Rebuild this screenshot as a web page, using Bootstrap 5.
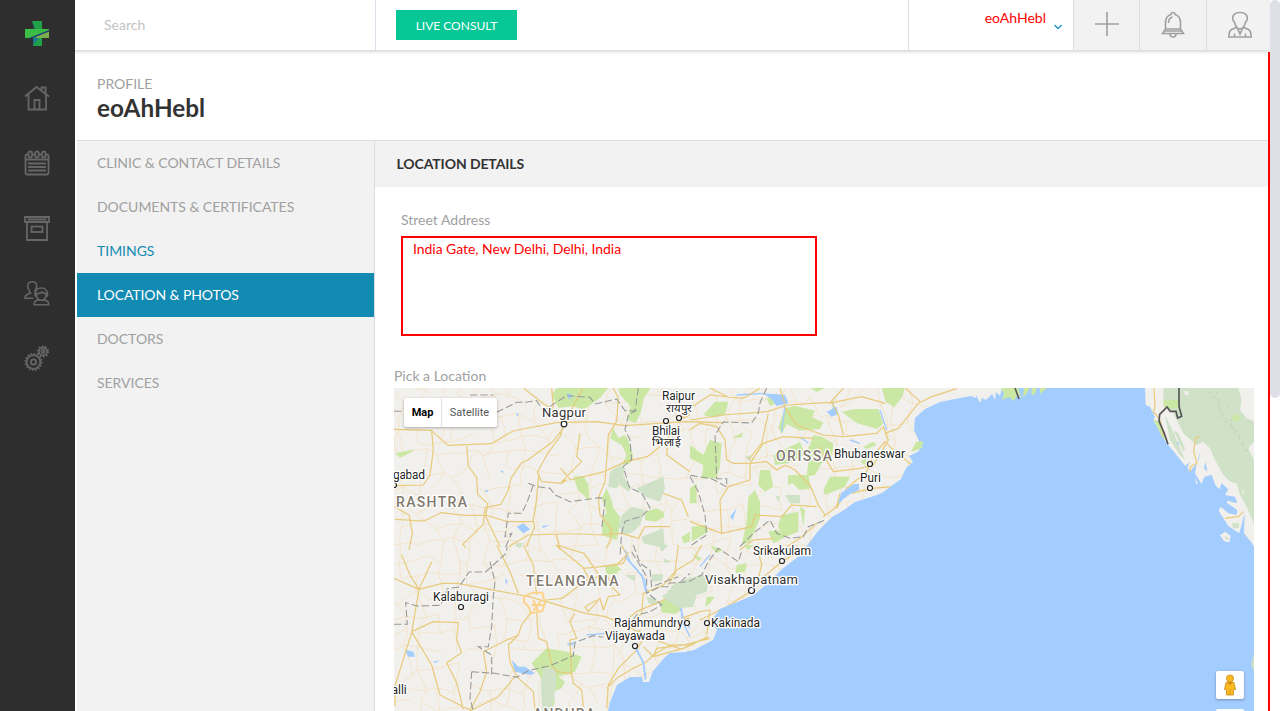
<!DOCTYPE html>
<html lang="en">
<head>
<meta charset="utf-8">
<meta name="viewport" content="width=device-width, initial-scale=1">
<title>Profile - Location &amp; Photos</title>
<link rel="stylesheet" href="https://cdn.jsdelivr.net/npm/bootstrap@5.3.0/dist/css/bootstrap.min.css">
<style>
body{font-family:Lato,sans-serif;font-size:14px;line-height:20px;color:#333;height:711px;overflow:hidden;background:#fff}
.rail{width:75px;background:#2e2e2e;padding:20px 1px 0 0;gap:39px}
.rail svg{width:26px;height:26px;fill:none;stroke:#666;stroke-width:1.8}
.shell{width:1193px;margin-left:2px}
.topbar{height:51px;margin-left:-2px;width:1195px;border-bottom:1px solid #ddd;box-shadow:0 1px 3px rgba(0,0,0,.15);position:relative;z-index:2;background:#fff}
.search-box{width:301px;border-right:1px solid #dddde9;padding-left:29px;color:#c3c3c3}
.consult{width:121px;height:30px;margin:10px 0 0 20px;background:#07c796;color:#fff;font-size:12px;border-radius:0;padding:0;line-height:30px}
.account{width:166px;border-left:1px solid #ddd;border-right:1px solid #ddd;color:red;padding:8px 7px 0 0}
.tool{height:50px;background:#f2f2f2;border-right:1px solid #ddd}
.tool svg{fill:none;stroke:#a0a0a0;stroke-width:1.6}
.profile-head{height:90px;border-bottom:1px solid #ddd;padding:23px 0 0 20px}
.profile-head div{height:20px}
.profile-head h1{font-size:24.300px;line-height:28px;font-weight:700;margin:0}
.muted-ink{color:#a0a0a0}
.side{width:298px;background:#f2f2f2;border-right:1px solid #ddd}
.side .nav-link{height:44px;padding:12px 20px;color:#a0a0a0;border-radius:0;letter-spacing:-.03px}
.side .visited-step{color:#128bb3}
.side .active{background:#128bb3;color:#fff;letter-spacing:-.1px}
.section-title{height:46px;background:#f2f2f2;padding:13px 21.500px;font-weight:700;letter-spacing:-.1px}
.address{width:416px;height:100px;border:2px solid red;border-radius:0;color:red;font-size:14px;line-height:20px;padding:1px 10px;resize:none;letter-spacing:-.05px}
.error-edge{width:2px;background:red;margin-top:52px}
.scroll-track{width:10px;background:#fff}
.scroll-thumb{height:398px;background:#dfdfe8;border-radius:5px}
.map-wrap{width:860px;height:323px;margin-left:19px;font-family:Roboto,sans-serif}
.map-type{left:10px;top:10px;height:29px;font-size:11px;background:#fff;border-radius:2px;box-shadow:0 1px 3px rgba(0,0,0,.3)}
.map-type span{line-height:29px;text-align:center}
.street-man{right:10px;top:283px;width:28px;height:28px;background:#fff;border-radius:2px;box-shadow:0 1px 3px rgba(0,0,0,.3)}
.zoom-ctl{right:10px;top:321px;width:28px;height:28px;background:#fff;border-radius:2px}
.park{fill:#cae7a3}.wood{fill:#cfe2c8}.water{fill:#a3ccff}.land{fill:#f2f0ec}
.major{fill:none;stroke:#e8ca7b;stroke-width:3.6;stroke-linejoin:round}
.minor{fill:none;stroke:#f3e3c8;stroke-width:.9;stroke-linejoin:round}
.stateline{fill:none;stroke:#999;stroke-width:3.2;stroke-dasharray:22 9}
.stream{fill:none;stroke:#a3ccff;stroke-width:4}
.places text{font-size:12px;fill:#222;stroke:#fff;stroke-width:2.5px;paint-order:stroke;stroke-linejoin:round}
.places .city{font-size:13px;fill:#333}
.places .hindi{font-size:11px;font-family:sans-serif}
.places .region{font-size:14px;fill:#80796c;font-weight:500}
.places circle{fill:#fff;stroke:#222;stroke-width:1.2}
</style>
</head>
<body>
<div class="d-flex h-100">
  <aside class="rail d-flex flex-column align-items-center flex-shrink-0">
    <svg viewBox="0 0 26 26"><g stroke="none"><path fill="#21a04a" d="M8 1h10v8h7v9h-7v8H9v-8H1V9h9z"/><path fill="#3cbd45" d="M1 9h24v1.500L7 18H1z"/><path fill="#78ae4c" d="M12 16l13-4.500V18H12z"/><path fill="#207887" d="M9 18h6l-6 7z"/><path fill="#233d79" d="M5 18 25 10v1.500L9 18zM8 1l3 8h-1z"/></g></svg>
    <svg viewBox="0 0 26 26"><path d="M1 11.500 12.500 2 25 11.500M4.500 9.500V24.500H22V9.500M10.500 24.500V15h5v9.500M17.500 5.500V2.500h4v6.500"/></svg>
    <svg viewBox="0 0 26 26"><path d="M4 4.500H3Q1.500 4.500 1.500 6v16.500Q1.500 24.500 3 24.500h20q1.500 0 1.500-2V6q0-1.500-1.500-1.500h-1M1.500 9.500h23M8 4.500h3M15 4.500h3M4 13.500h18M4 17h18M4 20.500h18"/><rect x="4.500" y="1.500" width="3.500" height="6" rx="1.700"/><rect x="11.200" y="1.500" width="3.500" height="6" rx="1.700"/><rect x="18" y="1.500" width="3.500" height="6" rx="1.700"/></svg>
    <svg viewBox="0 0 26 26"><path d="M1 2h24v5H1zM3 7v18h20V7M3.500 4.500h19"/><rect x="7.500" y="11.500" width="11" height="5.500"/></svg>
    <svg viewBox="0 0 26 26" style="stroke-width:1.6"><path d="M10.500 11.500C12 9 13 7.500 12.700 5.500 12.300 3 10.500 1.700 8.200 1.700S4 3 3.700 5.500C3.500 8 4.500 9 5 10 5.500 11.500 6 12.500 6.500 13L2.500 15Q1 16 1 18.300H9.500M12.500 16.500Q11 16.500 11 14.500C11 10.500 13.500 8 17.200 8S23.500 10.500 23.500 14.500Q23.500 16.500 22 16.500M12.500 13.500Q17 13.500 18 12 20 13.500 22 13.500V16C21.500 18.500 19.500 20.300 17.200 20.300S13 18.500 12.500 16ZM14.500 19.700 11.500 21Q10 22 10 24.700H24.800Q24.800 22 23 21L20 19.700"/></svg>
    <svg viewBox="0 0 26 26"><circle cx="9.500" cy="17" r="6.800"/><circle cx="9.500" cy="17" r="8.200" stroke-dasharray="1.600 1.620"/><circle cx="9.500" cy="17" r="2.600"/><circle cx="19" cy="6.500" r="4"/><circle cx="19" cy="6.500" r="5.300" stroke-dasharray="1.500 1.830"/><circle cx="19" cy="6.500" r="1.500"/></svg>
  </aside>
  <main class="shell d-flex flex-column flex-shrink-0">
    <header class="topbar d-flex flex-shrink-0">
      <div class="search-box d-flex align-items-center">Search</div>
      <button class="btn consult">LIVE CONSULT</button>
      <div class="account d-flex ms-auto justify-content-end"><span>eoAhHebl</span><svg class="ms-1 mt-2" width="16" height="16" fill="none" stroke="#2196c4" stroke-width="1.400"><path d="M4.500 9 8 12.500 11.500 9"/></svg></div>
      <div class="tool d-flex align-items-center justify-content-center" style="width:66px"><svg width="24" height="24" style="margin-top:-3px"><path d="M12 0v24M0 12h24"/></svg></div>
      <div class="tool d-flex align-items-center justify-content-center" style="width:67px"><svg width="24" height="28" viewBox="0 0 24 28"><path d="M4.500 18v-6q0-7 5.500-8.500 0-2 2-2t2 2q5.500 1.500 5.500 8.500v6M4.500 18h15l3 4.500H1.500L4.500 18M4 20h16M9 23q0 3 3 3t3-3M7.500 12q0-5 4-6"/></svg></div>
      <div class="tool d-flex align-items-center justify-content-center border-end-0" style="width:63px"><svg width="24" height="28" viewBox="0 0 24 28" style="margin-left:2px"><path d="M12 1.500C7 1.500 4.500 4 4.700 7.500Q4.900 10 6.300 11C7.500 15 9.500 18 12 18S16.500 15 17.700 11Q19.100 10 19.300 7.500C19.500 4 17 1.500 12 1.500ZM8.500 16.500 3.500 18.500Q.8 20.500.8 26H23.200Q23.200 20.500 20.500 18.500L15.500 16.500M9.500 17.500 12 23l2.500-5.500M6.500 22.500V26M17.500 22.500V26"/></svg></div>
    </header>
    <section class="profile-head flex-shrink-0"><div class="muted-ink">PROFILE</div><h1>eoAhHebl</h1></section>
    <div class="d-flex flex-grow-1">
      <nav class="side nav flex-column flex-shrink-0">
        <a class="nav-link">CLINIC &amp; CONTACT DETAILS</a><a class="nav-link">DOCUMENTS &amp; CERTIFICATES</a><a class="nav-link visited-step">TIMINGS</a><a class="nav-link active">LOCATION &amp; PHOTOS</a><a class="nav-link">DOCTORS</a><a class="nav-link">SERVICES</a>
      </nav>
      <section class="flex-grow-1">
        <div class="section-title">LOCATION DETAILS</div>
        <label class="muted-ink d-block" style="margin:23px 0 6px 26px">Street Address</label>
        <textarea class="address form-control shadow-none" style="margin-left:26px">India Gate, New Delhi, Delhi, India</textarea>
        <div class="muted-ink" style="margin:30px 0 2px 19px">Pick a Location</div>
        <div class="map-wrap position-relative overflow-hidden">
<svg class="d-block" width="860" height="323" viewBox="394 388 860 323">
<rect class="land" x="394" y="388" width="860" height="323"/>
<path id="mesh" class="minor"/>
<!-- forests and reserves, west -->
<g transform="translate(390 380) scale(.33333)">
<path class="park" d="M500 24h155l-25 30-50 35-30-10-45 5-20-40zM685 24h97l-20 30-10 45-15 30-25-10 10-40-32-35zM670 145l-10 30 35 20 15 30-15 30 25-5 10-20-15-50-10-15-20 10zM650 325l15 35 5 25 20 25-5 50-5 20-45-15 5-55 10-15-15-40zM550 290l30-2 15 25 3 50-15-15-20-20zM765 395l35-10 20 10 3 15-25 15-33-5zM875 470l25-15v30l-20 5zM15 220l60-12-15 10-30 15z"/>
<path class="wood" d="M660 275l30-20 15 10-10 35-15 25-25-5zM695 405l30-25 40 10-15 45-20 20-25 10-20-25zM740 325l80-35 5 35-15 40-45-15zM755 470l65-25 5 60-65-15zM375 490h25l-10 15zM695 280l30 45-10 10-25-20z"/>
<path class="water" d="M380 440l20-10 20 18-20 12zM285 330h12l-8 8zM380 95l6 12-6 3zM530 40l18 5-10 15zM455 438l25-4-20 10zM330 272h10v8z"/>
<path class="major" d="M12 148l112 3 50 45 130-5 65-38 130-25 120-3 85 12 185-12 110 3M400 24l65 50 25 15 30 38-8 40-40 55-30 55 13 28 60 5 15-10-15 5 60-60-15-15 10-70M485 24l5 60M578 24l-50 95M670 24l15 30-5 70-25 40-5 75-5 65-20 50 5 50 35 45-5 35-12 20M520 145l-32 40-75 55-20 10-30 45-8 35-22 43-48 10-5 50-62 60 10 10M125 150l5 60-10 75-20 30-80 2M230 198l5 60 25 35 3 50 30 28-5 35-65 0-70-8-50 25-88-5M287 405l65 20h80M447 280l-10 100-8 40 5 20-25 60M512 265l30 35 100-25 65-30 65-15 50-40M12 380l45 25 10 55-10 50M285 405l45 95M355 500l60-35 100-3 60 0 60 3 60-5 50 15 20-35h75M500 465l10 45M820 340l55 20 20 50M865 55l15 60 20-10M840 125l-10 100 70 50"/>
<path class="stateline" d="M12 94h30M240 45h70M320 97l60-30 25 0 35-5 20 30 70-45 70 5 15 20 65-15 25 35 30 0 15 0M745 24l-10 70-20 10-10 45 15 30 5 60-25 20 15 55 5 10 35 15 25 45-25 25-50 15-10 35-5 70M415 310l25 10 40 5 15 20 45 20 90-12 15 5-10 90M430 315l-20 55-15 30-40 0-10 70 20-10-20 45"/>
</g>
<!-- central highlands -->
<g transform="translate(390 545) scale(.33333)">
<path class="park" d="M425 355l45-45 60 10 45 15-20 45-50 15 20 15-10 20-25 10 5 30-15 35h-20l15-65-15-30zM815 165l35 0 22 30-15 12-40-5zM645 65l35-5 15 15-40 12z"/>
<path class="wood" d="M460 370l35 0 5 40-15 88h-28l-5-80zM830 140l70-45v90l-35-20zM785 88l35 0-5 20-30 2zM820 40l25 10-20 5zM370 0h25l-5 10zM770 155l30 5v20l-25-5z"/>
<path class="water" d="M365 345l20 20 20 0 30 20-15 5-25-5-20-5zM530 295l30-5-20 15zM45 315l25 5 5 15-20 0zM130 350l20-5-15 10zM345 100l8 8-5 12z"/>
<path class="major" d="M12 100l75 33 70-18 45 0 215 40 70 20 100 30 60 10 50 22 50 25 55 25 70 25M35 30l25 60 27 43-22 130-50 160 0 60M65 260l60 100 25 90 95 48M125 50l-38 83M65 260l65-30 75 3-5 50 15 40-45 30 30 60 20 80M320 0l40 80 25 65M400 0l30 60 10 90M497 0l80 65 20 35-80 60-50 5M497 0l85 25 45 65-30 25M580 70l100-10 30-30-15-30M620 165l-35 20 10 15 35-40 10 35 15-40 35-5-25-25-15-40M440 205l5 75 25 10 15 70 15 20 45 5-5-100 20-5-20-50 15-25M425 200l-30 40-10 30-30 30 5 50 20 45 50 45 5 55M280 320l60-30 45-20M280 320l10 60-20 60-30 55M375 395l-50 60-80 40M545 385l5 30 25 20 5 50M650 490l5-70 30-50 50-50 30-45-20-20M650 430l30-30 50-30 40-20 20-20 50-30 70 0M865 0l-10 80-35 40-60 25-5 60-20 20M765 240l135-20M690 240l50-40 150-65"/>
<path d="M402 155l25-12h30l8 30-8 25-35 8-5-20-15-15zM430 165l15 35M455 163l-25 35M425 180h35" fill="none" stroke="#fcd38b" stroke-width="6"/>
<path class="stream" d="M705 15l15 35 35 40 12 50M590 270l55-5M735 310l25 40 8 50M870 190l15 40 15 20" />
<path class="stateline" d="M12 238l40 0-5-65 35 10 70-2 20-50 35-5 30-45 50 0 60-55 5-20M300 50l15 60-5 45-5 90-10 60-30 0 40 25 0 60M245 380l70 5 65 12 35-20 65-15 70-30 5-40 55-20 30 5M245 380l-5 80 10 38M725 20l45 75 0 50 40-20 45 0 45-40"/>
</g>
<!-- Orissa -->
<g transform="translate(690 380) scale(.33333)">
<path class="park" d="M40 105l35-40 40 0-10 40-35 8zM230 55l30-15v30l-20 8zM285 85l30-8 60 15-10 20 35 15-10 20-60 5-40-20-15 30-10-20zM455 95l40-8 70 0 15 45-20 15-60-18zM575 24h68l-5 25-25 33-25-15zM360 24h45l-25 12zM370 165l25 5 35 20-5 45-30 15-20 35-25 5 5-45-15-20 20-30zM250 225l80-40 15 40-50 25-40 5zM295 285l60 0 8 40-35 5-20-20-15 5zM400 330l20-40 60 0-15 30-60 25zM0 195l40 30 20-45 35 10-5 70-10 35-45 0 5-40-40-20zM210 270l30 0 10 50-25 15-20-20zM175 350l20-20 15 35 0 50-30 70-25 10 15-70zM275 405l50-10 0 60-50 20-10-40zM0 325l20-15v60l-20 0zM5 440l40-5 10 20-50 30zM235 455l30-5 15 25-30 15zM520 200l30-15 10 10-30 12zM510 245l20-10-5 20zM125 175l35-18-5 15zM330 380l15 10-5 50z"/>
<path class="wood" d="M165 230l20-5-5 20zM285 345l45 0v25h-30zM255 345l15 5-5 15z"/>
<path class="water" d="M220 40l65 5 10 25-35 8-15-20zM410 95l30-15 5 22-20 8zM120 410l20-25-12 35z"/>
<path class="stream" d="M140 45l80-5M285 75l-10 80M430 65v40M570 90l20 60M330 170l25 20M480 180l30 10"/>
<path class="major" d="M0 120l100-15 130-10 65-20 120-8M0 85l60-40 100 10 50-30M60 24l60 30M270 24l15 50M280 75l40 60 80 30 60 5 100-10 20-20 15 40-20 35-25 40M425 65l20 40 15 60M460 24l-40 45M415 70l100-20 70 20M585 160l40-15 60-75 40-20 75-24M645 24l45 40M0 150l30-20 50 10 25 40 5 60 20 10 50 0 50-5 30 25 25-15 30 15 45 45 25 60 20 30M180 250l0 50-65 20-25 40 5 100-95-35M180 250l40-60 60-20 90 5M385 200l30 50 15 25 80-10 40-10M440 385l30-60 60-50 20-50 35-40 20 20 60 50M485 340l60-15 60-5M400 410l40-30 10-40M380 430l-50 45-40 25M95 460l90-20 10-35 80 5 30-35 75 5M150 510l40-30 60-5M235 100l-20 90-40 50"/>
<path class="stateline" d="M230 24l-20 45-5 30-20 30-85-3-25 40 5 130 30 0 0 25-45-25-65-10M0 290l25 45 20 70 5 60-45 30M150 500l40-40 50-40 20 40 40 15 40-5 15-30 50-20"/>
</g>
<!-- northern Andhra coast -->
<g transform="translate(600 545) scale(.33333)">
<path class="park" d="M180 170l40-10 20 30-15 15-40-3zM410 60l30-5-5 25-28 5zM320 155l25 0-20 25-10 5zM275 25l30 15-10 8zM15 65l25 5 15 15-35 5zM330 0l40 15-20 10zM430 0h30l-15 15z"/>
<path class="wood" d="M205 140l20-25 75-25 30 0-10 50-30 10-10 35-40 5-55-35zM75 90h30v20zM175 0h30l-20 20z"/>
<path class="major" d="M205 120l25-45 50-30 25-45M0 65l70-10 15-35M470 0l15 60-10 40M600 15l-60 40-60 50-30 35-70 45-80 40M245 220l55-20 30-5-10 75M160 335l10-25 80-10 80-20M130 305l30 30 90-25 75-35"/>
<path class="stateline" d="M205 115l60-5 40-20 20-40 30-40 60 40 10-30M100 0l20 55 30 20 5 50 80-30M150 150l35 30-35 20-40 10-20 25"/>
<path class="stream" d="M75 35l35 40 25 30 3 35M300 65l30-35M110 310l20 45 6 50M245 190v35l25 50"/>
</g>
<!-- Bay of Bengal -->
<path class="water" d="M608 711l2-9 7-17 13-8 12 0 1 5 6 0 4-11 12-14 5-4 15-1 9-2 19-10 4-10-4-5 1-8 6-8 22-9 12-5 15-13 12-12 18-14 20-26 13-13 12-7 11-8 19-6 8-3 19-14 5-11 7-6-4-6 10-5 1-8-6-13 1-12 10-9 15-7 35-7V388h294V711z"/>
<path class="park" d="M911 452l5-10 7-1-1 7z"/>
<path class="water" d="M838 504l3-11 13-9 5 0 0 6-9 4z"/><path class="land" d="M843 499l8-3 2 2-11 5z"/>
<path class="land" d="M959 388h17v10l-4-2-12 1zM976 388h26l-2 8-4-4-1 8-3-6-6 6-4-2-2 5-4-8-4 3z"/><path class="park" d="M1001 388h17l4 11-4-5-4 7-5-4-7 3 2-6zM1024 388h6l-4 7-3 1zM1032 388h5l-3 8-3-3zM1040 388h7l-7 6z"/>
<path d="M1015 388l4 11" stroke="#555" stroke-width="1.500" fill="none"/>
<!-- eastern shore -->
<g transform="translate(1100 380) scale(.33333)">
<path class="land" d="M135 24H465V505L455 488 432 460 434 400 418 460 385 438 356 392 362 380 385 400 410 405 412 390 380 368 382 362 412 370 405 350 375 345 385 328 365 310 358 328 346 315 335 285 313 290 304 312 285 280 290 250 270 275 262 262 270 245 256 258 240 238 205 195 190 175 160 120 165 110 150 80 137 75zM360 465L376 455 392 468 388 487 372 484zM285 292L294 313 288 310z"/>
<path class="wood" d="M190 24L190 80 215 90 235 130 250 160 290 195 310 185 330 205 345 240 370 285 390 305 410 310 420 345 440 380 465 440V24zM195 105L215 145 240 205 255 240 240 225 210 180zM220 150L235 160 255 205 250 215zM395 430L418 430 415 445 400 445zM372 468L388 474 380 480z"/>
<path class="park" d="M190 60h45l5 25-45 0zM160 118L180 125 200 180 188 173zM397 107L412 103 425 115 410 125 397 118z"/>
<path class="land" d="M415 24H465V125L440 115 420 90 425 60zM445 205L462 185V240zM253 33h12v12h-10zM432 320L430 345 426 340z"/>
<path fill="none" stroke="#bdd0b5" stroke-width="4" stroke-dasharray="8 13" opacity=".65" d="M325 35l30 30 10 50 45 40 30 60M350 35l10 55 60 80M380 55l20 100 50 70"/>
<path class="water" d="M292 245L302 210 296 240zM230 185l8 5-5 5zM312 265l5-20 5 30z"/>
<path class="major" d="M162 24l3 60-5 10 20 25 10 50M298 170l-12 5-5 40 10 35-20 10 0 15M375 415l40-5 15-15"/>
<path d="M237 24v55l8 30-12 5-5-20-17 0-10-13-10 10-12 12-2 20 15 35 12 35" fill="none" stroke="#555" stroke-width="5"/>
<path class="wood" d="M463 815v60l-10-20z"/>
</g>
<g class="places">
<circle cx="564" cy="424" r="2.800"/><circle cx="679" cy="418" r="2.500"/><circle cx="666" cy="421" r="2.500"/><circle cx="870" cy="464" r="2.500"/><circle cx="870" cy="488" r="2.500"/><circle cx="782" cy="561" r="2.500"/><circle cx="751.500" cy="590.500" r="3"/><circle cx="707" cy="623" r="2.500"/><circle cx="687" cy="623" r="2.500"/><circle cx="635" cy="646" r="2.500"/><circle cx="461" cy="607" r="2.500"/><circle cx="394" cy="485" r="2.500"/>
<text class="city" x="542" y="417" textLength="44">Nagpur</text><text x="662" y="400" textLength="33">Raipur</text><text class="hindi" x="666" y="412" textLength="26" lengthAdjust="spacingAndGlyphs">रायपुर</text><text x="652" y="435" textLength="28">Bhilai</text><text class="hindi" x="652" y="446" textLength="28" lengthAdjust="spacingAndGlyphs">भिलाई</text>
<text class="region" x="776" y="461" textLength="56">ORISSA</text><text x="834" y="458" textLength="71">Bhubaneswar</text><text x="860" y="482" textLength="21">Puri</text><text x="393" y="479" textLength="32">gabad</text><text class="region" x="396" y="507" textLength="71">RASHTRA</text><text x="753" y="555" textLength="58">Srikakulam</text><text class="city" x="705" y="584" textLength="93">Visakhapatnam</text><text class="region" x="526" y="586" textLength="92.500">TELANGANA</text><text x="433" y="601" textLength="56">Kalaburagi</text><text x="614" y="627" textLength="69">Rajahmundry</text><text x="711" y="627" textLength="49">Kakinada</text><text x="605" y="640" textLength="60">Vijayawada</text><text x="391.500" y="694">alli</text><text class="region" x="533" y="719" textLength="62">ANDHRA</text>
</g>
</svg>
          <div class="map-type position-absolute d-flex"><span class="fw-bold text-black border-end" style="width:38px">Map</span><span style="width:55px;color:#565656">Satellite</span></div>
          <div class="street-man position-absolute d-flex align-items-center justify-content-center"><svg width="14" height="22"><path d="M3 8.500h8l1.500 7h-2V21h-7v-5.500h-2z" fill="#fbb922" stroke="#c88c18" stroke-width=".8"/><circle cx="7" cy="4.500" r="3.600" fill="#fbb922" stroke="#c88c18" stroke-width=".8"/><path d="M5 8.500h4L7 11zM7 15v6" fill="#e37b12" stroke="#c88c18" stroke-width=".6"/></svg></div>
          <div class="zoom-ctl position-absolute"></div>
        </div>
      </section>
    </div>
  </main>
  <div class="error-edge flex-shrink-0" style="margin-left:-2px;z-index:1"></div>
  <div class="scroll-track flex-shrink-0" style="z-index:3"><div class="scroll-thumb"></div></div>
</div>
<script>
// Local road web: a jittered lattice with some links left out
(function(){
  let s=41; const r=()=>(s=(s*16807)%2147483647)/2147483647;
  const W=34,H=20,p=[];
  for(let j=0;j<H;j++){p.push([]);for(let i=0;i<W;i++)p[j].push([388+i*17+(r()-.5)*15,382+j*18+(r()-.5)*15])}
  const link=(a,b)=>'M'+a.map(n=>n.toFixed(1))+'L'+((a[0]+b[0])/2+(r()-.5)*5).toFixed(1)+','+((a[1]+b[1])/2+(r()-.5)*5).toFixed(1)+'L'+b.map(n=>n.toFixed(1));
  let d='';
  for(let j=0;j<H;j++)for(let i=0;i<W;i++){if(i<W-1&&r()<.7)d+=link(p[j][i],p[j][i+1]);if(j<H-1&&r()<.65)d+=link(p[j][i],p[j+1][i])}
  document.getElementById('mesh').setAttribute('d',d);
})();
</script>
<script src="https://cdn.jsdelivr.net/npm/bootstrap@5.3.0/dist/js/bootstrap.bundle.min.js"></script>
</body>
</html>
